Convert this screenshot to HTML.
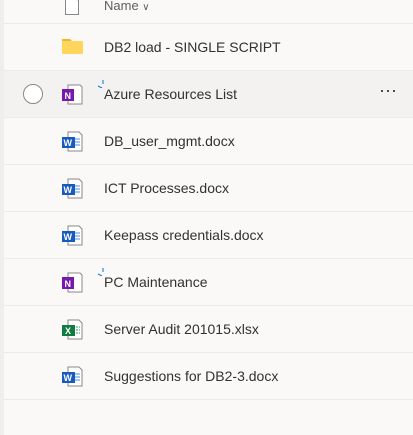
<!DOCTYPE html>
<html><head><style>
body{margin:0;width:413px;height:435px;background:#faf9f8;font-family:"Liberation Sans",sans-serif;position:relative;overflow:hidden}
.strip{position:absolute;left:0;top:0;width:4px;height:435px;background:#efeeed}
.row{position:absolute;left:4px;width:409px;height:46px;border-bottom:1px solid #edebe9}
.t{position:absolute;left:100px;top:15px;font-size:14px;color:#323130;white-space:nowrap}
.ic{position:absolute;left:57px;top:12px}
</style></head><body>
<div class="strip"></div>
<div class="row" style="top:0;height:23px">
<svg class="ic" style="top:-4px;left:58px" width="20" height="20"><path d="M3.5 0.5h9l4 4v14h-13z" fill="#fff" stroke="#8a8886"/></svg>
<div class="t" style="top:-2px;color:#605e5c;font-size:13px">Name <span style="font-size:10px">&#8744;</span></div></div>
<div class="row" style="top:24px"><svg class="ic" style="left:57px;top:13px" width="24" height="20"><path d="M1 2h8l2 2H1z" fill="#f2b531"/><rect x="1" y="4" width="21" height="13" rx="1" fill="#ffd65c"/></svg><div class="t">DB2 load - SINGLE SCRIPT</div></div>
<div class="row" style="top:71px;background:#f3f2f1"><div style="position:absolute;left:19px;top:13px;width:18px;height:18px;border:1px solid #8a8886;border-radius:50%;background:#fff"></div>
<svg class="ic" width="26" height="26"><path d="M7 2h12l2 2v17h-14z" fill="#fff" stroke="#8a8886"/><rect x="1" y="6" width="12" height="12" fill="#7719aa"/><text x="3.5" y="16" font-size="9" fill="#fff" font-family="Liberation Sans" font-weight="bold">N</text></svg>
<svg style="position:absolute;left:93px;top:9px" width="8" height="8"><path d="M1 6l4 2M6 0v4" stroke="#0078d4"/></svg>
<div class="t">Azure Resources List</div><div style="position:absolute;left:375px;top:9px;font-size:18px;color:#323130">&middot;&middot;&middot;</div></div>
<div class="row" style="top:118px"><svg class="ic" width="26" height="26"><path d="M7 2h11l3 3v16h-14z" fill="#fff" stroke="#8a8886"/><path d="M14 9h5M14 12h5M14 15h5" stroke="#4a8fe0"/><rect x="1" y="7" width="13" height="11" fill="#185abd"/><text x="2.5" y="16" font-size="9" fill="#fff" font-weight="bold">W</text></svg><div class="t">DB_user_mgmt.docx</div></div>
<div class="row" style="top:165px"><svg class="ic" width="26" height="26"><path d="M7 2h11l3 3v16h-14z" fill="#fff" stroke="#8a8886"/><path d="M14 9h5M14 12h5M14 15h5" stroke="#4a8fe0"/><rect x="1" y="7" width="13" height="11" fill="#185abd"/><text x="2.5" y="16" font-size="9" fill="#fff" font-weight="bold">W</text></svg><div class="t">ICT Processes.docx</div></div>
<div class="row" style="top:212px"><svg class="ic" width="26" height="26"><path d="M7 2h11l3 3v16h-14z" fill="#fff" stroke="#8a8886"/><path d="M14 9h5M14 12h5M14 15h5" stroke="#4a8fe0"/><rect x="1" y="7" width="13" height="11" fill="#185abd"/><text x="2.5" y="16" font-size="9" fill="#fff" font-weight="bold">W</text></svg><div class="t">Keepass credentials.docx</div></div>
<div class="row" style="top:259px"><svg class="ic" width="26" height="26"><path d="M7 2h12l2 2v17h-14z" fill="#fff" stroke="#8a8886"/><rect x="1" y="6" width="12" height="12" fill="#7719aa"/><text x="3.5" y="16" font-size="9" fill="#fff" font-weight="bold">N</text></svg>
<svg style="position:absolute;left:93px;top:9px" width="8" height="8"><path d="M1 6l4 2M6 0v4" stroke="#0078d4"/></svg><div class="t">PC Maintenance</div></div>
<div class="row" style="top:306px"><svg class="ic" width="26" height="26"><path d="M7 2h11l3 3v16h-14z" fill="#fff" stroke="#8a8886"/><path d="M15 9h4M15 12h4M15 15h4" stroke="#21a366" stroke-dasharray="2 1"/><rect x="1" y="7" width="13" height="11" fill="#107c41"/><text x="4" y="16" font-size="9" fill="#fff" font-weight="bold">X</text></svg><div class="t">Server Audit 201015.xlsx</div></div>
<div class="row" style="top:353px"><svg class="ic" width="26" height="26"><path d="M7 2h11l3 3v16h-14z" fill="#fff" stroke="#8a8886"/><path d="M14 9h5M14 12h5M14 15h5" stroke="#4a8fe0"/><rect x="1" y="7" width="13" height="11" fill="#185abd"/><text x="2.5" y="16" font-size="9" fill="#fff" font-weight="bold">W</text></svg><div class="t">Suggestions for DB2-3.docx</div></div>
</body></html>
